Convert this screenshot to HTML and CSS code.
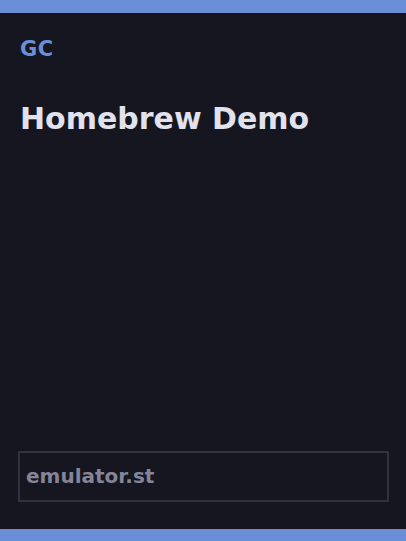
FILE: index.html
```html
<!DOCTYPE html>
<html>
<head>
    <meta charset="utf-8">
    <link rel="stylesheet" href="styles.css">
</head>
<body>
    <div class="bar"></div>

    <div class="screen">
        <div class="brand">GC</div>
        <h1 class="title">Homebrew Demo</h1>

        <div class="footer-box">
            <span class="site">emulator.st</span>
        </div>
    </div>

    <div class="bar bar-bottom"></div>
</body>
</html>
```

FILE: styles.css
```css
html, body {
    margin: 0;
    height: 100%;
}

body {
    display: flex;
    flex-direction: column;
    background: #15161f;
    font-family: 'DejaVu Sans', sans-serif;
    font-weight: bold;
}

.bar {
    height: 13px;
    background: #6a8fd8;
    flex-shrink: 0;
}

.bar-bottom {
    height: 12px;
}

.screen {
    flex: 1;
    display: flex;
    flex-direction: column;
    padding: 24px 17px 27px 18px;
}

.brand {
    margin-left: 2px;
    font-size: 21px;
    letter-spacing: 0.5px;
    color: #6a8fd8;
}

.title {
    margin: 40px 0 0 2px;
    font-size: 30px;
    color: #e2e2ee;
}

.footer-box {
    margin-top: auto;
    height: 51px;
    box-sizing: border-box;
    display: flex;
    align-items: center;
    padding: 0 6px 2px;
    border: 2px solid #31313f;
}

.site {
    font-size: 20px;
    color: #858599;
}
```
